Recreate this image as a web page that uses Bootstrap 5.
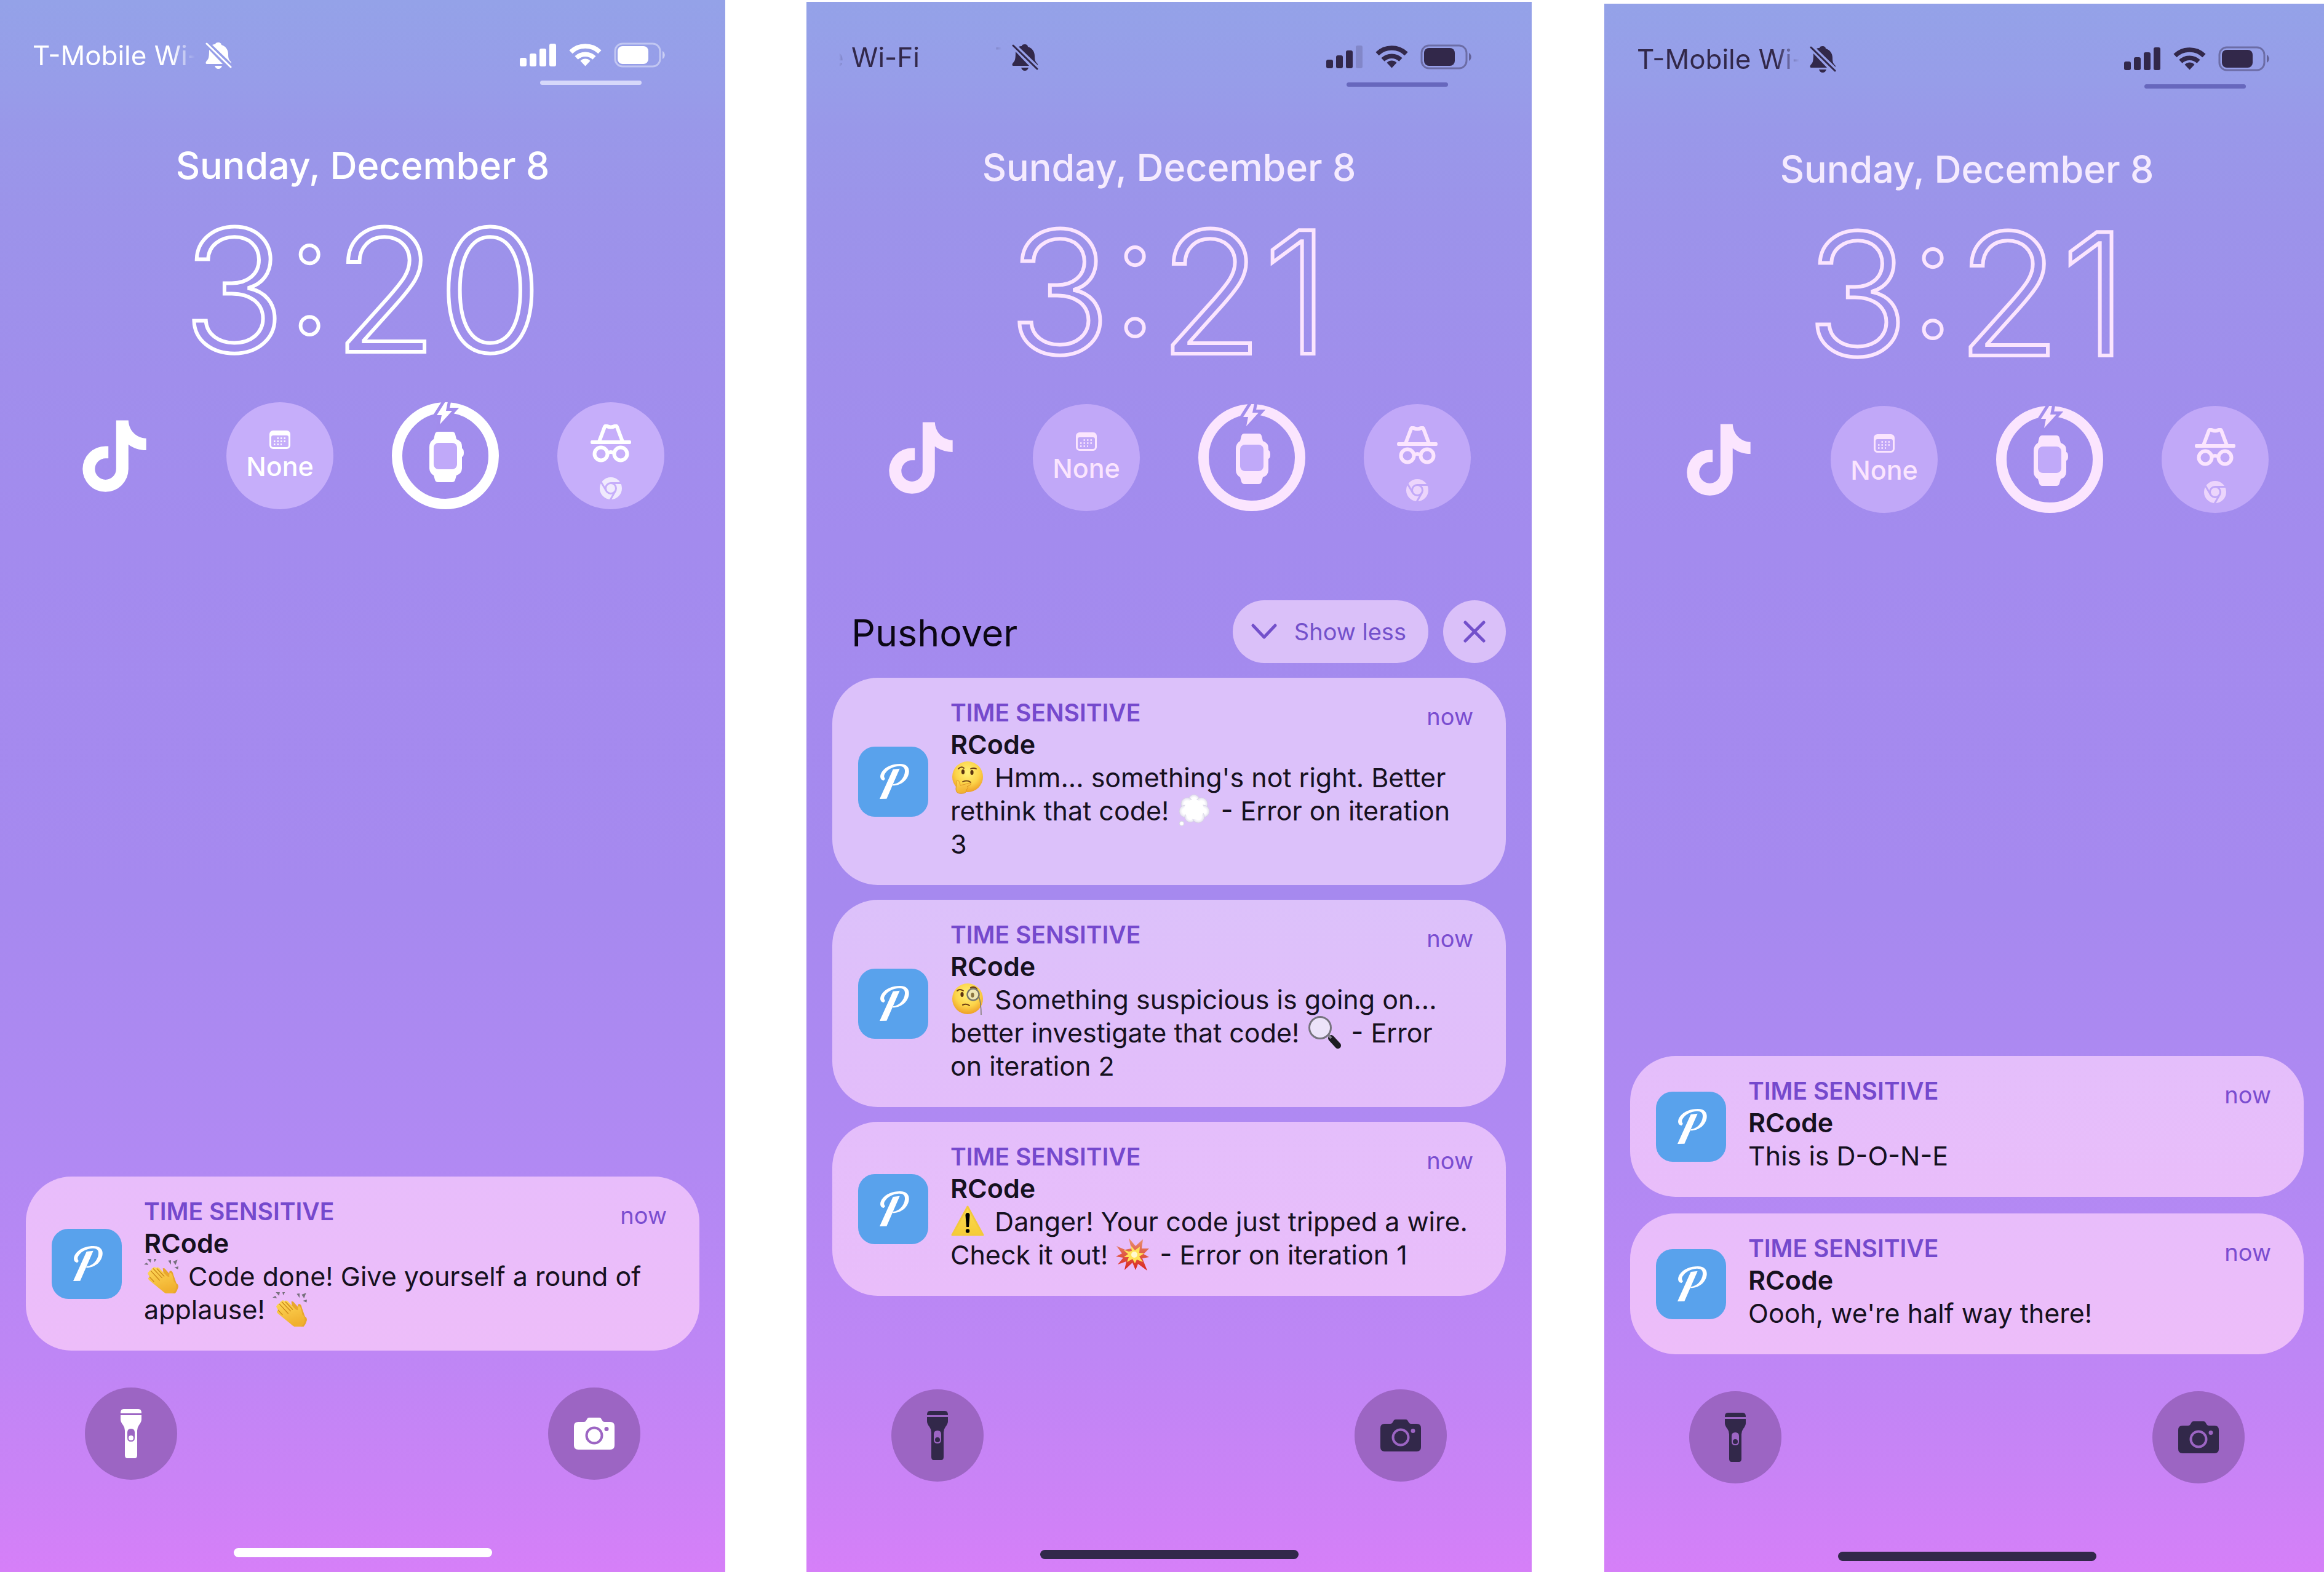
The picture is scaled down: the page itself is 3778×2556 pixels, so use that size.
<!DOCTYPE html>
<html lang="en">
<head>
<meta charset="utf-8">
<meta name="viewport" content="width=device-width, initial-scale=1">
<title>Lock screen notifications</title>
<link href="https://cdn.jsdelivr.net/npm/bootstrap@5.3.0/dist/css/bootstrap.min.css" rel="stylesheet">
<style>
  body { font-family: Inter, "Liberation Sans", sans-serif; background: #fff; }
  .stage { height: 100vh; margin-right: -9px; }
  .stage-wrap { overflow: hidden; }
  .phone {
    --ink: #32284a; --soft: #fbe5fe; --disc: #c1a8f8; --bar: #6767bd;
    flex: 1 1 0; min-width: 0; height: 100vh; min-height: 2556px;
    background: linear-gradient(#94a2e8 0, #979de9 5%, #9998e9 8%, #9c93ea 14%, #a08eec 24%, #a38bee 34%, #a689ef 57%, #b189f3 74%, #be86f5 86%, #ca83f6 94%, #d67ff8 100%);
  }
  .phone-light { --ink: #fff; --soft: #fff; --disc: #c6aefa; --bar: #d6d8fa; }
  .phone-mid { margin: 3px 118px 0 132px; }
  .phone-end { margin-top: 6px; }
  .status { padding: 64px 98px 0 53px; color: var(--ink); }
  .carrier { width: 264px; font-size: 44px; line-height: 52px; white-space: nowrap; -webkit-mask-image: linear-gradient(90deg, #000 86%, transparent); mask-image: linear-gradient(90deg, #000 86%, transparent); }
  .carrier-roll { overflow: hidden; -webkit-mask-image: linear-gradient(90deg, transparent, #000 9%, #000 84%, transparent); mask-image: linear-gradient(90deg, transparent, #000 9%, #000 84%, transparent); }
  .carrier-roll span:first-child { margin-left: -18px; }
  .carrier-roll span:last-child { margin-right: -18px; }
  .status svg { height: 44px; display: block; }
  .i-bell { width: 44px; margin-left: 16px; }
  .i-status { width: 236px; }
  .indicator { width: 165px; height: 7px; border-radius: 4px; background: var(--bar); margin: 15px 136px 0 auto; }
  .date { margin: 98px 0 0; font-size: 61px; line-height: 66px; font-weight: 500; text-align: center; color: #f5ebfe; }
  .phone-light .date { color: #fff; }
  .clock { font-size: 276px; line-height: 340px; font-weight: 300; text-align: center; color: transparent; -webkit-text-stroke: 6px var(--soft); white-space: nowrap; }
  .widgets { margin: 12px 99px 0; color: var(--soft); }
  .widget { width: 174px; height: 174px; }
  .disc { background: var(--disc); }
  .widget svg { display: block; }
  .none-label { font-size: 43px; line-height: 48px; font-weight: 500; }
  .stack { padding: 0 42px; }
  .stack-low { margin-bottom: 60px; }
  .stack-top { padding-top: 145px; }
  .app-name { font-size: 61px; line-height: 78px; font-weight: 400; color: #0b0714; margin: 4px 0 0 31px; }
  .pill { height: 102px; border: 0; border-radius: 51px; background: #dac0f9; color: #7350cb; font-size: 38px; --bs-btn-color: #7350cb; }
  .pill-less { width: 318px; padding: 0 36px 0 30px; }
  .pill-x { width: 102px; padding: 0; }
  .notes { gap: 24px; }
  .notes-wide { gap: 27px; }
  .note { border-radius: 74px; padding: 33px 53px 40px 42px; gap: 36px; color: #16111f; background: #dcc1fa; }
  .note-b { background: linear-gradient(#dcc1fa, #e3bdfa); }
  .note-c { background: linear-gradient(#e4befb, #e9bdfa); }
  .note-d { background: linear-gradient(#e8bdfb, #edbdf9); }
  .note-body { line-height: 54px; font-size: 43px; white-space: nowrap; }
  .note-kind { font-size: 39px; line-height: 48px; font-weight: 600; color: #7549cd; }
  .note-when { font-size: 38px; line-height: 48px; color: #7a4dd0; margin: 6px 0 -6px; }
  .note-name { font-size: 43px; line-height: 54px; font-weight: 600; margin: 0; }
  .i-app { width: 114px; height: 114px; border-radius: 27px; display: block; margin-top: 7px; }
  .emo { width: 56px; height: 56px; vertical-align: -2px; margin: -10px 4px -10px 0; }
  .tools { padding: 0 138px; }
  .tool { width: 150px; height: 150px; padding: 0; border: 0; background: #9c65c3; color: var(--ink); }
  .tool svg { display: block; margin: auto; }
  .home { width: 420px; height: 15px; border-radius: 8px; background: var(--ink); margin: 111px auto 24px; flex: none; }
</style>
<script src="https://cdn.jsdelivr.net/npm/bootstrap@5.3.0/dist/js/bootstrap.bundle.min.js"></script>
</head>
<body>
<svg width="0" height="0" class="position-absolute" aria-hidden="true">
  <defs>
    <radialGradient id="face" cx=".5" cy=".35" r=".65"><stop offset="0" stop-color="#fff27a"/><stop offset=".6" stop-color="#fcd449"/><stop offset="1" stop-color="#ee9f27"/></radialGradient>
    <linearGradient id="hand" x2=".3" y2="1"><stop offset="0" stop-color="#ffd95a"/><stop offset="1" stop-color="#f0b02e"/></linearGradient>
    <linearGradient id="sign" y2="1" x2="0"><stop offset="0" stop-color="#fbdc52"/><stop offset="1" stop-color="#f5cb37"/></linearGradient>
    <linearGradient id="bang" y2="1" x2="0"><stop offset="0" stop-color="#e8936f"/><stop offset="1" stop-color="#d9231d"/></linearGradient>
    <radialGradient id="puff"><stop offset=".5" stop-color="#fff"/><stop offset="1" stop-color="#e3e0ee"/></radialGradient>
  </defs>
  <symbol id="bell" viewBox="0 0 44 44">
    <path fill="currentColor" d="M22 1c3 0 5 2 5 4 7 2 11 8 11 15 0 7 1 9 4 12 1 1 1 2 1 3L12 5c2-1 3-1 5-1 0-2 2-3 5-3zM7 13l22 23H3c-2 0-2-3 0-5 3-3 4-6 4-18zM16 39h12c-1 3-3 5-6 5s-5-2-6-5z"/>
    <path stroke="currentColor" stroke-width="3" stroke-linecap="round" d="M3 3l39 38"/>
  </symbol>
  <symbol id="radio" viewBox="845 66 236 44">
    <rect x="845" y="92" width="11" height="14" rx="3"/><rect x="861" y="85" width="11" height="21" rx="3"/><rect x="877" y="77" width="11" height="29" rx="3"/>
    <g fill="none" stroke="currentColor" stroke-width="7.500"><path d="M928 82.500a34 34 0 0 1 47 0"/><path d="M937 92a21 21 0 0 1 29 0"/></g>
    <path d="M951.500 105.500l-8-8.500a11 11 0 0 1 16 0z"/>
    <rect x="1000" y="69" width="73" height="37" rx="12" fill="none" stroke="currentColor" stroke-width="3" opacity=".42"/>
    <rect x="1004" y="73" width="50" height="29" rx="8"/><path opacity=".5" d="M1077 81c5 3 5 10 0 13z"/>
  </symbol>
  <symbol id="tiktok" viewBox="42 37 313 351"><path fill="currentColor" d="M207 38h60c2 50 38 86 87 88v58c-32 0-62-9-87-28v120a112 112 0 1 1-112-112h14v60h-14a52 52 0 1 0 52 52z"/></symbol>
  <symbol id="cal" viewBox="0 0 34 30">
    <path fill="currentColor" fill-rule="evenodd" d="M6 0h22a6 6 0 0 1 6 6v18a6 6 0 0 1-6 6H6a6 6 0 0 1-6-6V6a6 6 0 0 1 6-6zm0 8a3 3 0 0 0-3 3v13a3 3 0 0 0 3 3h22a3 3 0 0 0 3-3V11a3 3 0 0 0-3-3z"/>
    <path stroke="currentColor" stroke-width="2.500" stroke-dasharray="2.500 3" d="M12.500 12.500H28M7 17.500h21M7 22.500h13"/>
  </symbol>
  <symbol id="watch" viewBox="0 0 174 174">
    <circle cx="87" cy="87" r="78.500" fill="none" stroke="currentColor" stroke-width="17"/>
    <path fill="currentColor" stroke="#a18cec" stroke-width="10" paint-order="stroke" d="M87-1L73 21h8l-3 15L98 14H88l3-15z"/>
    <path fill="currentColor" d="M75 48h23q4 0 5 4l2 8q9 3 9 12v3q3 1 3 7t-3 7v18q0 9-9 12l-2 7q-1 4-5 4H75q-4 0-5-4l-2-7q-7-4-7-12V73q0-9 7-13l2-8q1-4 5-4z"/>
    <rect x="68" y="66" width="38" height="43" rx="8" fill="#c0a9f9"/>
  </symbol>
  <symbol id="spy" viewBox="0 0 66 62">
    <path fill="currentColor" d="M2 26h62q2 0 2 3t-2 3H2q-2 0-2-3t2-3z"/>
    <path fill="none" stroke="currentColor" stroke-width="6" stroke-linejoin="round" d="M14 28L23 4q1-2 4-1 6 3 12 0 3-1 4 1l9 24"/>
    <g fill="none" stroke="currentColor" stroke-width="6"><circle cx="17" cy="48" r="10.500"/><circle cx="49" cy="48" r="10.500"/><path d="M27 47q6-4 12 0"/></g>
  </symbol>
  <symbol id="chrome" viewBox="0 0 36 36">
    <circle cx="18" cy="18" r="18" fill="currentColor"/>
    <g fill="none" stroke="var(--disc)" stroke-width="3"><circle cx="18" cy="18" r="8.500"/><path d="M18 9.500h17M10.600 22L2 7.500M25.500 22L17 37"/></g>
  </symbol>
  <symbol id="torch" viewBox="0 0 34 80">
    <path fill="currentColor" fill-rule="evenodd" d="M5 0h24q5 0 5 6v1H0V6q0-6 5-6zM0 10h34v7q0 4-4 9-3 4-3 9v40q0 5-4 5H11q-4 0-4-5V35q0-5-3-9-4-5-4-9zm17 22q-6 0-6 6v9q0 6 6 6t6-6v-9q0-6-6-6z"/>
    <circle cx="17" cy="47" r="4" fill="currentColor"/>
  </symbol>
  <symbol id="camera" viewBox="0 0 66 52">
    <path fill="currentColor" fill-rule="evenodd" d="M25 0h16q3 0 4 3l2 3q1 1 3 1h9q7 0 7 7v31q0 7-7 7H7q-7 0-7-7V14q0-7 7-7h9q2 0 3-1l2-3q1-3 4-3zm8 14.500a14.500 14.500 0 1 0 0 29 14.500 14.500 0 1 0 0-29zM53 15a3.500 3.500 0 1 0 0 7 3.500 3.500 0 1 0 0-7z"/>
    <circle cx="33" cy="29" r="10.500" fill="currentColor"/>
  </symbol>
  <symbol id="push" viewBox="6 6 342 342">
    <rect x="6" y="6" width="342" height="342" fill="#59a2ec"/>
    <path fill="#fff" d="M131 171C114 170 108 150 122 129 140 103 175 90 210 90c33 0 46 18 44 40-3 35-34 66-80 66l3-7c28-2 54-28 57-60 2-20-9-29-30-28-30 2-56 17-68 38-6 10-3 18 2 24zM176 117l33-4-64 147-34 1z"/>
  </symbol>
  <symbol id="think" viewBox="0 0 56 56">
    <circle cx="28" cy="27" r="25" fill="url(#face)"/>
    <g fill="none" stroke="#6b3d12" stroke-linecap="round" stroke-width="1.800"><path d="M13 14q5-5 9-1M33 14q5-2 9 0M20 35q8-3 13 1"/></g>
    <ellipse cx="20.500" cy="19" rx="2.600" ry="4" fill="#5b3410"/><ellipse cx="35" cy="20" rx="2.600" ry="4" fill="#5b3410"/>
    <path fill="url(#hand)" stroke="#dd9524" d="M11 33c3-1 4 4 5 8 6-1 13-4 16-4 3 1 2 3-5 6 3 1 1 4-1 5 1 3-2 6-6 6-9 1-11-2-11-8 1-5 0-12 2-13z"/>
  </symbol>
  <symbol id="monocle" viewBox="0 0 56 56">
    <circle cx="28" cy="27" r="25" fill="url(#face)"/>
    <g fill="none" stroke="#6b3d12" stroke-linecap="round" stroke-width="2"><path d="M11 14q4-4 10 0M33 9q6-3 10 2M20 37q6-3 11 1"/></g>
    <circle cx="37" cy="20" r="9.500" fill="#efe7b4" stroke="#7b7768" stroke-width="2.500"/>
    <ellipse cx="19" cy="20" rx="2.600" ry="4" fill="#5b3410"/><ellipse cx="36" cy="21" rx="2.600" ry="4" fill="#8a7440"/>
    <path d="M46 22q4 12 4 31" fill="none" stroke="#7b7768" stroke-width="1.500"/>
  </symbol>
  <symbol id="thought" viewBox="0 0 56 56">
    <g fill="url(#puff)" stroke="#d3cfe2" stroke-width=".8"><circle cx="28" cy="11" r="9"/><circle cx="17" cy="17" r="10"/><circle cx="40" cy="17" r="10"/><circle cx="14" cy="29" r="10"/><circle cx="43" cy="29" r="10"/><circle cx="22" cy="38" r="9"/><circle cx="35" cy="38" r="10"/><circle cx="8" cy="49" r="4"/></g>
    <circle cx="28" cy="26" r="16" fill="#fff"/>
  </symbol>
  <symbol id="lens" viewBox="0 0 56 56">
    <path stroke="#1d1c22" stroke-width="10" stroke-linecap="round" d="M39 37l11 12"/><path stroke="#85828f" stroke-width="4" d="M33 30l6 7"/>
    <circle cx="21" cy="20" r="17.500" fill="#ece3f9" stroke="#77747f" stroke-width="3"/>
  </symbol>
  <symbol id="warn" viewBox="0 0 56 56">
    <path fill="url(#sign)" stroke="#f3c93c" stroke-width="3" stroke-linejoin="round" d="M28 4l25 46H3z"/>
    <path d="M24.500 18q0-4 3.500-4t3.500 4L30 37h-4z"/><circle cx="28" cy="43.500" r="3.200"/>
  </symbol>
  <symbol id="boom" viewBox="0 0 56 56">
    <path fill="url(#bang)" d="M26 18L22 1l11 13L45 3l-2 15 12 0-9 9 9 5-11 2 8 20-15-11-4 10-5-12-13 12 3-14-14 5 9-11L1 31l10-5-9-12 14 6z"/>
    <path fill="#ffe35a" d="M27 22l-2-9 7 8 8-6-1 10 8 1-8 5 6 9-10-4-3 6-4-7-9 5 3-8-8 0 7-5-8-7 9 3z"/><circle cx="31" cy="28" r="5" fill="#fff9d0"/>
  </symbol>
  <symbol id="clap" viewBox="230 242 56 56">
    <g transform="translate(230 242) scale(.3333)">
      <path fill="#e9a62c" d="M92 46q8-4 14 6l18 20q-2-16 8-14 8 2 12 20l14 40q14 10 8 24-8 30-30 34-20 2-30-20z"/>
      <path fill="url(#hand)" d="M24 62q2-8 12-6-2-10 8-12 4-8 16 0 6-8 16 2l34 36q6 6 14 6-2-18 4-20 8 0 12 16l6 26q16 12 10 34-8 24-28 26-22 4-38-14L28 106q-10-8-6-14 4-4 8 0l-8-14q-8-10 2-16z"/>
      <path fill="none" stroke="#c98518" stroke-width="4" stroke-linecap="round" d="M34 58l42 46M46 48l42 44M64 48l34 36M28 88l20 22"/>
      <path fill="#77707d" d="M16 0l20-2-4 20zM0 26l14-8 8 12zM48-2l14 0-10 18zM118 8l14-2 0 22zM142 12l22-8-10 26zM148 42l20-6-2 14z"/>
    </g>
  </symbol>
  <symbol id="down" viewBox="0 0 42 26"><path fill="none" stroke="currentColor" stroke-width="5" stroke-linecap="round" stroke-linejoin="round" d="M3 3l18 19L39 3"/></symbol>
  <symbol id="cross" viewBox="0 0 36 36"><path stroke="currentColor" stroke-width="5" stroke-linecap="round" d="M3 3l30 30M33 3L3 33"/></symbol>
</svg>

<div class="stage-wrap">
<main class="stage d-flex align-items-start">

  <section class="phone phone-light d-flex flex-column">
    <header class="status d-flex align-items-center">
      <span class="carrier">T-Mobile Wi-</span>
      <svg class="i-bell"><use href="#bell"/></svg>
      <svg class="i-status ms-auto" viewBox="845 66 236 44" fill="currentColor"><use href="#radio" x="845" y="66" width="236" height="44"/><rect x="893" y="69" width="11" height="37" rx="3"/></svg>
    </header>
    <div class="indicator"></div>
    <h2 class="date">Sunday, December 8</h2>
    <div class="clock">3:20</div>
    <div class="widgets d-flex justify-content-between">
      <div class="widget d-flex align-items-center justify-content-center"><svg width="104" height="117"><use href="#tiktok"/></svg></div>
      <div class="widget disc rounded-circle d-flex flex-column align-items-center justify-content-center"><svg width="34" height="30"><use href="#cal"/></svg><span class="none-label mt-1">None</span></div>
      <div class="widget"><svg width="174" height="174"><use href="#watch"/></svg></div>
      <div class="widget disc rounded-circle d-flex flex-column align-items-center justify-content-end pb-3"><svg width="66" height="62"><use href="#spy"/></svg><svg class="mt-4 opacity-75" width="36" height="36"><use href="#chrome"/></svg></div>
    </div>
    <div class="stack stack-low flex-grow-1 d-flex flex-column justify-content-end">
      <article class="note note-d d-flex align-items-center">
        <svg class="i-app flex-shrink-0"><use href="#push"/></svg>
        <div class="note-body flex-grow-1">
          <div class="d-flex justify-content-between"><span class="note-kind">TIME SENSITIVE</span><span class="note-when">now</span></div>
          <h3 class="note-name">RCode</h3>
          <svg class="emo"><use href="#clap"/></svg> Code done! Give yourself a round of<br>applause! <svg class="emo"><use href="#clap"/></svg>
        </div>
      </article>
    </div>
    <div class="tools d-flex justify-content-between">
      <button class="btn tool rounded-circle" aria-label="Flashlight"><svg width="34" height="80"><use href="#torch"/></svg></button>
      <button class="btn tool rounded-circle" aria-label="Camera"><svg width="66" height="52"><use href="#camera"/></svg></button>
    </div>
    <div class="home"></div>
  </section>

  <section class="phone phone-mid d-flex flex-column">
    <header class="status d-flex align-items-center">
      <span class="carrier carrier-roll d-flex justify-content-between"><span>e Wi-Fi</span><span>T</span></span>
      <svg class="i-bell"><use href="#bell"/></svg>
      <svg class="i-status ms-auto" viewBox="845 66 236 44" fill="currentColor"><use href="#radio" x="845" y="66" width="236" height="44"/><rect x="893" y="69" width="11" height="37" rx="3" opacity=".2"/></svg>
    </header>
    <div class="indicator"></div>
    <h2 class="date">Sunday, December 8</h2>
    <div class="clock">3:21</div>
    <div class="widgets d-flex justify-content-between">
      <div class="widget d-flex align-items-center justify-content-center"><svg width="104" height="117"><use href="#tiktok"/></svg></div>
      <div class="widget disc rounded-circle d-flex flex-column align-items-center justify-content-center"><svg width="34" height="30"><use href="#cal"/></svg><span class="none-label mt-1">None</span></div>
      <div class="widget"><svg width="174" height="174"><use href="#watch"/></svg></div>
      <div class="widget disc rounded-circle d-flex flex-column align-items-center justify-content-end pb-3"><svg width="66" height="62"><use href="#spy"/></svg><svg class="mt-4 opacity-75" width="36" height="36"><use href="#chrome"/></svg></div>
    </div>
    <div class="stack stack-top flex-grow-1">
      <div class="d-flex align-items-center gap-4 mb-4">
        <h1 class="app-name me-auto">Pushover</h1>
        <button class="btn pill pill-less d-flex align-items-center justify-content-between"><svg width="42" height="26"><use href="#down"/></svg>Show less</button>
        <button class="btn pill pill-x d-flex align-items-center justify-content-center" aria-label="Clear"><svg width="36" height="36"><use href="#cross"/></svg></button>
      </div>
      <div class="notes d-flex flex-column">
        <article class="note d-flex align-items-center">
          <svg class="i-app flex-shrink-0"><use href="#push"/></svg>
          <div class="note-body flex-grow-1">
            <div class="d-flex justify-content-between"><span class="note-kind">TIME SENSITIVE</span><span class="note-when">now</span></div>
            <h3 class="note-name">RCode</h3>
            <svg class="emo"><use href="#think"/></svg> Hmm... something's not right. Better<br>rethink that code! <svg class="emo"><use href="#thought"/></svg> - Error on iteration<br>3
          </div>
        </article>
        <article class="note note-b d-flex align-items-center">
          <svg class="i-app flex-shrink-0"><use href="#push"/></svg>
          <div class="note-body flex-grow-1">
            <div class="d-flex justify-content-between"><span class="note-kind">TIME SENSITIVE</span><span class="note-when">now</span></div>
            <h3 class="note-name">RCode</h3>
            <svg class="emo"><use href="#monocle"/></svg> Something suspicious is going on...<br>better investigate that code! <svg class="emo"><use href="#lens"/></svg> - Error<br>on iteration 2
          </div>
        </article>
        <article class="note note-c d-flex align-items-center">
          <svg class="i-app flex-shrink-0"><use href="#push"/></svg>
          <div class="note-body flex-grow-1">
            <div class="d-flex justify-content-between"><span class="note-kind">TIME SENSITIVE</span><span class="note-when">now</span></div>
            <h3 class="note-name">RCode</h3>
            <svg class="emo"><use href="#warn"/></svg> Danger! Your code just tripped a wire.<br>Check it out! <svg class="emo"><use href="#boom"/></svg> - Error on iteration 1
          </div>
        </article>
      </div>
    </div>
    <div class="tools d-flex justify-content-between">
      <button class="btn tool rounded-circle" aria-label="Flashlight"><svg width="34" height="80"><use href="#torch"/></svg></button>
      <button class="btn tool rounded-circle" aria-label="Camera"><svg width="66" height="52"><use href="#camera"/></svg></button>
    </div>
    <div class="home"></div>
  </section>

  <section class="phone phone-end d-flex flex-column">
    <header class="status d-flex align-items-center">
      <span class="carrier">T-Mobile Wi-</span>
      <svg class="i-bell"><use href="#bell"/></svg>
      <svg class="i-status ms-auto" viewBox="845 66 236 44" fill="currentColor"><use href="#radio" x="845" y="66" width="236" height="44"/><rect x="893" y="69" width="11" height="37" rx="3"/></svg>
    </header>
    <div class="indicator"></div>
    <h2 class="date">Sunday, December 8</h2>
    <div class="clock">3:21</div>
    <div class="widgets d-flex justify-content-between">
      <div class="widget d-flex align-items-center justify-content-center"><svg width="104" height="117"><use href="#tiktok"/></svg></div>
      <div class="widget disc rounded-circle d-flex flex-column align-items-center justify-content-center"><svg width="34" height="30"><use href="#cal"/></svg><span class="none-label mt-1">None</span></div>
      <div class="widget"><svg width="174" height="174"><use href="#watch"/></svg></div>
      <div class="widget disc rounded-circle d-flex flex-column align-items-center justify-content-end pb-3"><svg width="66" height="62"><use href="#spy"/></svg><svg class="mt-4 opacity-75" width="36" height="36"><use href="#chrome"/></svg></div>
    </div>
    <div class="stack stack-low flex-grow-1 d-flex flex-column justify-content-end notes-wide">
      <article class="note note-c d-flex align-items-center">
        <svg class="i-app flex-shrink-0"><use href="#push"/></svg>
        <div class="note-body flex-grow-1">
          <div class="d-flex justify-content-between"><span class="note-kind">TIME SENSITIVE</span><span class="note-when">now</span></div>
          <h3 class="note-name">RCode</h3>
          This is D-O-N-E
        </div>
      </article>
      <article class="note note-d d-flex align-items-center">
        <svg class="i-app flex-shrink-0"><use href="#push"/></svg>
        <div class="note-body flex-grow-1">
          <div class="d-flex justify-content-between"><span class="note-kind">TIME SENSITIVE</span><span class="note-when">now</span></div>
          <h3 class="note-name">RCode</h3>
          Oooh, we're half way there!
        </div>
      </article>
    </div>
    <div class="tools d-flex justify-content-between">
      <button class="btn tool rounded-circle" aria-label="Flashlight"><svg width="34" height="80"><use href="#torch"/></svg></button>
      <button class="btn tool rounded-circle" aria-label="Camera"><svg width="66" height="52"><use href="#camera"/></svg></button>
    </div>
    <div class="home"></div>
  </section>

</main>
</div>
</body>
</html>
